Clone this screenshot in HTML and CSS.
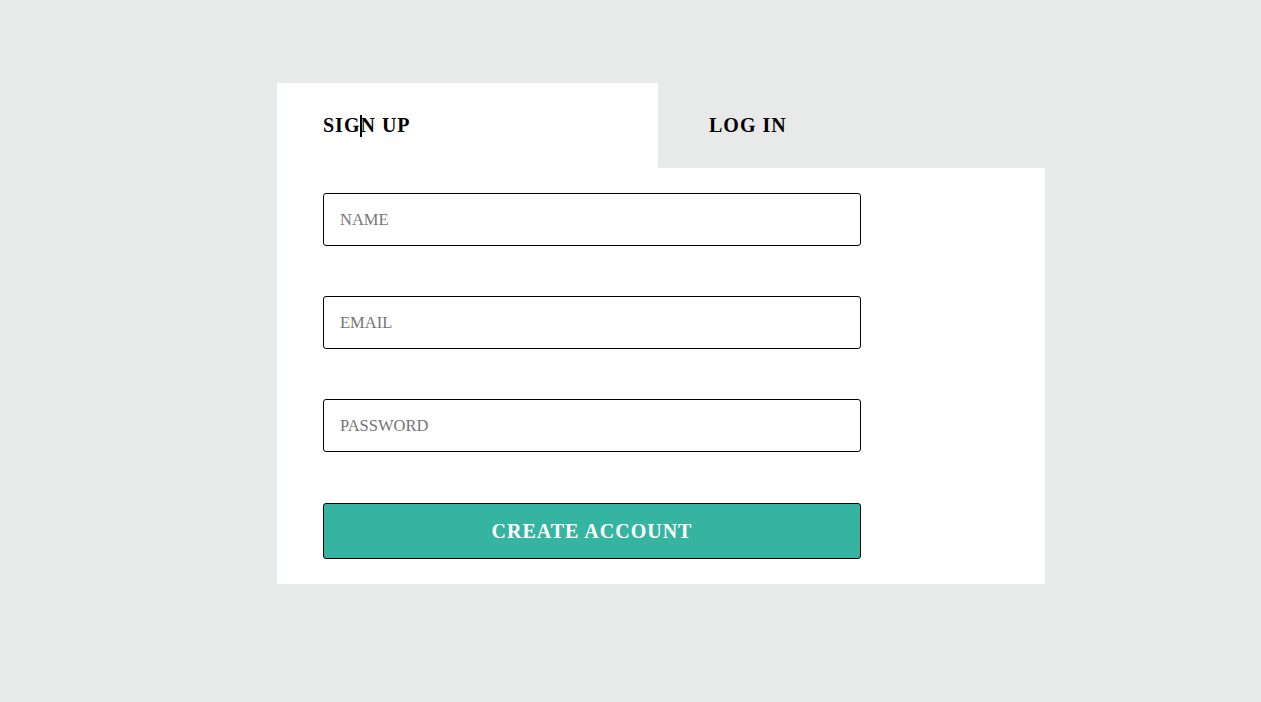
FILE: index.html
```html
<!DOCTYPE html>
<html>
<head>
<meta charset="utf-8">
<title>Sign up</title>
<link rel="stylesheet" href="styles.css">
</head>
<body>
<div class="page">
  <div class="card">
    <div class="tabs">
      <div class="tab tab-active">SIG<span class="caret"></span>N UP</div>
      <div class="tab">LOG IN</div>
    </div>
    <form class="form">
      <input class="field" type="text" placeholder="NAME">
      <input class="field" type="email" placeholder="EMAIL">
      <input class="field" type="password" placeholder="PASSWORD">
      <button class="submit" type="button">CREATE ACCOUNT</button>
    </form>
  </div>
</div>
</body>
</html>
```
FILE: styles.css
```css
html, body {
  margin: 0;
  padding: 0;
  background: #e8eae9;
  font-family: "Liberation Serif", "Times New Roman", serif;
}
.page {
  padding: 83px 0 0 277px;
}
.card {
  width: 768px;
}
.tabs {
  display: flex;
  height: 85px;
}
.tab {
  width: 381px;
  box-sizing: border-box;
  padding-left: 46px;
  display: flex;
  align-items: center;
  font-size: 20px;
  font-weight: bold;
  letter-spacing: 1px;
  color: #000;
}
.tab + .tab {
  padding-left: 51px;
}
.tab-active {
  background: #fff;
}
.caret {
  display: inline-block;
  width: 2px;
  height: 22px;
  background: #000;
  margin: 0 -2px 0 0;
  vertical-align: -4px;
}
.form {
  background: #fff;
  padding: 25px 46px;
  display: flex;
  flex-direction: column;
  gap: 50px;
  margin: 0;
}
.field {
  width: 538px;
  height: 53px;
  box-sizing: border-box;
  border: 1px solid #000;
  border-radius: 3px;
  padding: 0 16px;
  font-family: "Liberation Serif", "Times New Roman", serif;
  font-size: 16.5px;
  color: #000;
  background: #fff;
  outline: none;
}
.field::placeholder {
  color: #757575;
}
.submit {
  width: 538px;
  height: 56px;
  box-sizing: border-box;
  border: 1px solid #000;
  border-radius: 3px;
  background: #35b4a1;
  color: #fff;
  font-family: "Liberation Serif", "Times New Roman", serif;
  font-size: 20px;
  font-weight: bold;
  letter-spacing: 1px;
  margin-top: 1px;
  cursor: pointer;
}
```
